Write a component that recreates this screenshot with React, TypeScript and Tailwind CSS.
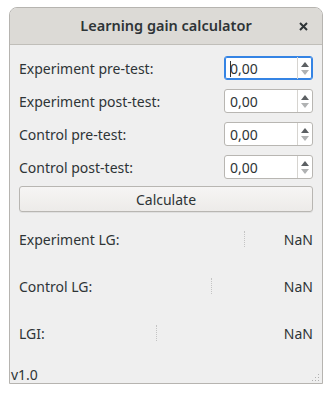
import React from "react"

const inputs = [
  { label: "Experiment pre-test:", focused: true },
  { label: "Experiment post-test:" },
  { label: "Control pre-test:" },
  { label: "Control post-test:" },
]

const results = [
  { label: "Experiment LG:", dots: 225 },
  { label: "Control LG:", dots: 192 },
  { label: "LGI:", dots: 137 },
]

function SpinBox({ focused }: { focused?: boolean }) {
  return (
    <div
      className={
        "flex h-[24px] w-[89px] rounded-[3px] border bg-white " +
        (focused ? "border-[#3584e4] shadow-[inset_0_0_0_1px_#3584e4]" : "border-[#b8b6b2]")
      }
    >
      <div className="relative flex flex-1 items-center pl-[5px] text-[14px] text-[#2e3436]">
        {focused && <span className="absolute left-[5px] top-[4px] h-[16px] w-px bg-[#2e3436]" />}
        0,00
      </div>
      <div className="flex w-[15px] flex-col items-center justify-center gap-[3px] border-l border-[#d6d4d0]">
        <span className="h-0 w-0 border-x-[4px] border-b-[5px] border-x-transparent border-b-[#5c6063]" />
        <span className="h-0 w-0 border-x-[4px] border-t-[5px] border-x-transparent border-t-[#b0b2b3]" />
      </div>
    </div>
  )
}

export default function App() {
  return (
    <div className="h-[394px] w-[332px] bg-white pl-[9px] pt-[7px]" style={{ fontFamily: '"Noto Sans", sans-serif' }}>
      <div className="flex h-[377px] w-[314px] flex-col overflow-hidden rounded-t-[8px] border border-[#b6b4b0] bg-[#efefef]">
        <div className="relative flex h-[37px] shrink-0 items-center justify-center border-b border-[#c0beb9] bg-[#dcdad6]">
          <span className="text-[14.5px] font-semibold text-[#2e3436]">Learning gain calculator</span>
          <svg className="absolute right-[14px] top-[14px]" width="9" height="9" viewBox="0 0 9 9">
            <path d="M1 1L8 8M8 1L1 8" stroke="#2e3436" strokeWidth="2" />
          </svg>
        </div>
        <div className="flex flex-1 flex-col px-[9px] pt-[11px]">
          <div className="flex flex-col gap-[9px]">
            {inputs.map((item) => (
              <div key={item.label} className="flex items-center justify-between">
                <span className="text-[14px] text-[#2e3436]">{item.label}</span>
                <SpinBox focused={item.focused} />
              </div>
            ))}
          </div>
          <button className="mt-[7px] h-[26px] w-full rounded-[3px] border border-[#b8b6b2] bg-gradient-to-b from-[#f6f5f4] to-[#edebe9] text-[14px] text-[#2e3436] shadow-[0_1px_0_rgba(0,0,0,0.06)]">
            Calculate
          </button>
          <div className="mt-[19px] flex flex-col gap-[31px]">
            {results.map((r) => (
              <div key={r.label} className="relative flex h-[16px] items-center justify-between">
                <span className="text-[14px] text-[#2e3436]">{r.label}</span>
                <span
                  className="absolute top-0 h-[16px] border-l border-dotted border-[#c4c4c4]"
                  style={{ left: r.dots }}
                />
                <span className="text-[14px] text-[#2e3436]">NaN</span>
              </div>
            ))}
          </div>
          <div className="-mb-[2px] mt-auto flex items-end justify-between">
            <span className="-ml-[8px] text-[14px] text-[#2e3436]">v1.0</span>
            <svg width="9" height="9" viewBox="0 0 9 9" className="-mr-[7px] mb-[3px]">
              {[
                [7, 1], [4, 4], [7, 4], [1, 7], [4, 7], [7, 7],
              ].map(([x, y]) => (
                <rect key={`${x}-${y}`} x={x} y={y} width="1" height="1" fill="#b0b0b0" />
              ))}
            </svg>
          </div>
        </div>
      </div>
    </div>
  )
}
